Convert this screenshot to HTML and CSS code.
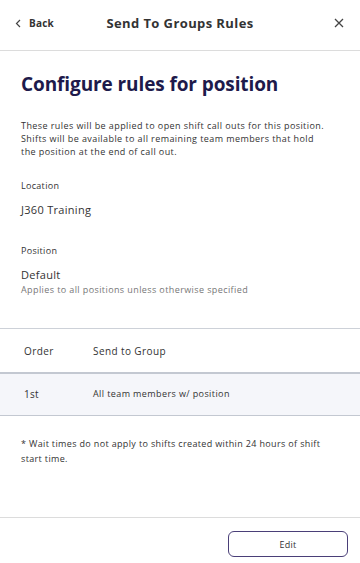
FILE: index.html
```html
<!DOCTYPE html>
<html lang="en">
<head>
    <meta charset="UTF-8">
    <meta name="viewport" content="width=device-width, initial-scale=1.0">
    <title>Send To Groups Rules</title>
    <link rel="stylesheet" href="styles.css">
</head>
<body>
    <div class="page">
        <div class="topbar">
            <a class="back" href="#">
                <svg width="6" height="9" viewBox="0 0 6 9"><path d="M5 1 L1.5 4.5 L5 8" fill="none" stroke="#444" stroke-width="1.2"/></svg>
                <span>Back</span>
            </a>
            <div class="topbar-title">Send To Groups Rules</div>
            <a class="close" href="#">
                <svg width="10" height="10" viewBox="0 0 10 10"><path d="M1 1 L9 9 M9 1 L1 9" fill="none" stroke="#444" stroke-width="1.3"/></svg>
            </a>
        </div>

        <div class="content">
            <h1>Configure rules for position</h1>
            <p class="intro">These rules will be applied to open shift call outs for this position. Shifts will be available to all remaining team members that hold the position at the end of call out.</p>

            <div class="field">
                <div class="label">Location</div>
                <div class="value">J360 Training</div>
            </div>

            <div class="field field-position">
                <div class="label">Position</div>
                <div class="value">Default</div>
                <div class="hint">Applies to all positions unless otherwise specified</div>
            </div>
        </div>

        <div class="rules">
            <div class="rules-head">
                <div class="col-order">Order</div>
                <div class="col-group">Send to Group</div>
            </div>
            <div class="rules-row">
                <div class="col-order">1st</div>
                <div class="col-group">All team members w/ position</div>
            </div>
        </div>

        <p class="note">* Wait times do not apply to shifts created within 24 hours of shift start time.</p>

        <div class="footer">
            <button class="edit-button">Edit</button>
        </div>
    </div>
</body>
</html>
```

FILE: styles.css
```css
* {
    box-sizing: border-box;
}

body {
    margin: 0;
    padding: 0;
    font-family: "Open Sans", "Noto Sans", sans-serif;
    background-color: #fff;
    color: #333;
}

.page {
    width: 360px;
    height: 563px;
    display: flex;
    flex-direction: column;
}

.topbar {
    height: 51px;
    flex-shrink: 0;
    border-bottom: 1px solid #dcdcdc;
    display: flex;
    align-items: center;
    justify-content: space-between;
    padding: 0 15px 4px;
    position: relative;
}

.back {
    display: flex;
    align-items: center;
    gap: 8px;
    text-decoration: none;
    color: #333;
    font-size: 10px;
    font-weight: 700;
    letter-spacing: 0.2px;
}

.topbar-title {
    position: absolute;
    left: 0;
    right: 0;
    text-align: center;
    font-size: 13px;
    font-weight: 700;
    letter-spacing: 0.4px;
    color: #333;
    pointer-events: none;
}

.close {
    display: flex;
    padding-right: 1px;
}

.content {
    padding: 20px 21px 0;
}

h1 {
    margin: 0;
    font-size: 19px;
    font-weight: 700;
    letter-spacing: -0.1px;
    color: #1e1a4b;
    line-height: 26px;
}

.intro {
    max-width: 307px;
    margin: 22px 0 0;
    font-size: 9px;
    letter-spacing: 0.42px;
    line-height: 13px;
    color: #333;
}

.field {
    margin-top: 22px;
}

.field-position {
    margin-top: 28px;
}

.label {
    font-size: 9px;
    letter-spacing: 0.3px;
    color: #333;
    line-height: 12px;
}

.value {
    margin-top: 11px;
    font-size: 11px;
    font-weight: 500;
    letter-spacing: 0.3px;
    color: #333;
    line-height: 14px;
}

.hint {
    margin-top: 2px;
    font-size: 9px;
    letter-spacing: 0.4px;
    color: #777;
    line-height: 12px;
}

.rules {
    margin-top: 32px;
    border-top: 1px solid #cdd1d8;
}

.rules-head,
.rules-row {
    display: flex;
    align-items: center;
    padding: 0 24px;
}

.rules-head {
    height: 45px;
    font-size: 10px;
    letter-spacing: 0.4px;
    color: #333;
    border-bottom: 2px solid #c3c8d1;
}

.rules-row {
    height: 42px;
    padding-bottom: 2px;
    background-color: #f5f6fa;
    border-bottom: 1px solid #c3c8d1;
    font-size: 10px;
    letter-spacing: 0.3px;
}

.col-order {
    width: 69px;
}

.rules-row .col-group {
    font-size: 9px;
    letter-spacing: 0.4px;
}

.note {
    margin: 20px 21px 0;
    font-size: 9px;
    letter-spacing: 0.35px;
    line-height: 15px;
    color: #333;
}

.footer {
    margin-top: auto;
    height: 46px;
    flex-shrink: 0;
    border-top: 1px solid #dcdcdc;
    display: flex;
    justify-content: flex-end;
    align-items: flex-start;
    padding: 13px 12px 0;
}

.edit-button {
    width: 120px;
    height: 26px;
    background-color: #fff;
    border: 1px solid #4a3f78;
    border-radius: 6px;
    font-family: inherit;
    font-size: 9px;
    letter-spacing: 0.3px;
    color: #333;
    cursor: pointer;
}
```
